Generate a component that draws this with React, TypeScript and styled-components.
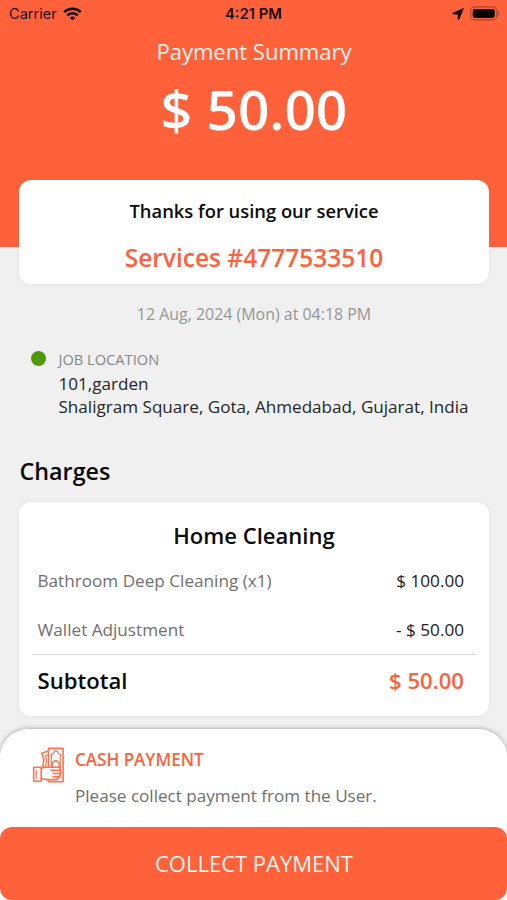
import React from 'react';
import styled, { createGlobalStyle } from 'styled-components';

const ORANGE = '#ff623b';

const GlobalStyle = createGlobalStyle`
  * { box-sizing: border-box; }
  body {
    margin: 0;
    background: #f0f0f0;
    font-family: "Open Sans", "Noto Sans", sans-serif;
    color: #0b0b0b;
  }
`;

const Screen = styled.main`
  width: 507px;
  height: 900px;
  display: flex;
  flex-direction: column;
  overflow: hidden;
  background: #f0f0f0;
`;

const Header = styled.header`
  flex: none;
  height: 247px;
  background: ${ORANGE};
  color: #fff;
  text-align: center;
`;

const StatusBar = styled.div`
  height: 27px;
  padding: 0 7px 0 9px;
  display: grid;
  grid-template-columns: 1fr auto 1fr;
  align-items: center;
  font-family: Inter, "Liberation Sans", sans-serif;
  font-size: 14.6px;
  color: #1c0a05;
`;

const StatusGroup = styled.div<{ $end?: boolean }>`
  display: flex;
  align-items: center;
  gap: 6px;
  justify-content: ${(p) => (p.$end ? 'flex-end' : 'flex-start')};
`;

const Clock = styled.span`
  margin-right: 2px;
  font-size: 14.8px;
  font-weight: 600;
`;

const Title = styled.h1`
  margin: 8px 0 0;
  padding-left: 1px;
  font-size: 22.05px;
  line-height: 32px;
  font-weight: 400;
  color: #fff3ee;
`;

const Total = styled.div`
  margin-top: 7px;
  padding-left: 1px;
  font-size: 55px;
  line-height: 70px;
  font-weight: 600;
`;

const Content = styled.div`
  flex: 1;
  min-height: 0;
  padding: 0 18px 0 19px;
  display: flex;
  flex-direction: column;
`;

const Card = styled.section`
  flex: none;
  background: #fff;
  border-radius: 12px;
  box-shadow: 0 0 5px rgba(0, 0, 0, 0.06);
`;

const ThanksCard = styled(Card)`
  height: 104px;
  margin-top: -67px;
  padding-top: 17px;
  text-align: center;
`;

const ThanksText = styled.p`
  margin: 0;
  font-size: 18.36px;
  line-height: 28px;
  font-weight: 600;
`;

const ServiceNumber = styled.p`
  margin: 15px 0 0;
  font-size: 24.5px;
  line-height: 36px;
  font-weight: 600;
  color: ${ORANGE};
`;

const DateText = styled.p`
  margin: 18px 0 0;
  font-size: 15.95px;
  line-height: 24px;
  text-align: center;
  color: #969696;
`;

const Location = styled.section`
  margin-top: 22px;
  padding-left: 12px;
  display: flex;
  gap: 12.5px;
`;

const Dot = styled.span`
  flex: none;
  width: 15px;
  height: 15px;
  margin-top: 3px;
  border-radius: 50%;
  background: #4f9a04;
`;

const LocationLabel = styled.div`
  font-size: 14.65px;
  line-height: 22px;
  color: #858585;
`;

const Address = styled.div`
  margin-top: 2px;
  font-size: 17.1px;
  line-height: 23px;
  color: #262626;
  white-space: nowrap;
`;

const SectionTitle = styled.h2`
  margin: 36px 0 0;
  padding-left: 0.5px;
  font-size: 23.3px;
  line-height: 34px;
  font-weight: 600;
`;

const ChargesCard = styled(Card)`
  height: 214px;
  margin-top: 14px;
  padding: 17px 13px 0;
`;

const ServiceTitle = styled.h3`
  margin: 0;
  font-size: 22.05px;
  line-height: 32px;
  font-weight: 600;
  text-align: center;
`;

const ChargeList = styled.div`
  padding-top: 5px;
  border-bottom: 1px solid #dadada;
  height: 104px;
`;

const ChargeRow = styled.div`
  height: 49px;
  padding: 0 12px 0 5.5px;
  display: flex;
  align-items: center;
  justify-content: space-between;
  font-size: 17.15px;
  color: #6f6f6f;
`;

const Amount = styled.span`
  color: #222;
`;

const SubtotalRow = styled(ChargeRow)`
  height: 49px;
  font-size: 22.1px;
  font-weight: 600;
  color: #0b0b0b;
`;

const SubtotalAmount = styled.span`
  color: ${ORANGE};
`;

const Sheet = styled.footer`
  flex: none;
  height: 171px;
  display: flex;
  flex-direction: column;
  justify-content: space-between;
  background: #fff;
  border-radius: 28px 28px 0 0;
  box-shadow: 0 -1px 4px rgba(0, 0, 0, 0.26);
`;

const Payment = styled.div`
  padding: 18px 0 0 32px;
  display: flex;
  gap: 10px;
`;

const PaymentMethod = styled.div`
  font-size: 17.05px;
  line-height: 26px;
  font-weight: 600;
  color: ${ORANGE};
`;

const PaymentNote = styled.div`
  margin-top: 10px;
  font-size: 17.1px;
  line-height: 26px;
  color: #6f6f6f;
`;

const CollectButton = styled.button`
  height: 73px;
  width: 100%;
  border: 0;
  padding: 0 0 1px 1px;
  border-radius: 12px;
  background: ${ORANGE};
  color: #fff3ee;
  font: 400 22px "Open Sans", "Noto Sans", sans-serif;
`;

const WifiIcon = () => (
  <svg width="19" height="14" viewBox="0 0 19 14" fill="none" stroke="#120400" strokeWidth="2.5">
    <path d="M1.2 5.2a11.8 11.8 0 0 1 16.6 0" />
    <path d="M4.1 8.4a7.7 7.7 0 0 1 10.8 0" />
    <path d="M9.5 13.6 6.7 10.8a4 4 0 0 1 5.6 0Z" fill="#120400" stroke="none" />
  </svg>
);

const LocationArrow = () => (
  <svg width="12" height="12" viewBox="0 0 12 12">
    <path d="M11.4.5 6.9 11.3c-.2.5-.8.4-.8-.2V6.1H.9c-.6 0-.7-.6-.2-.8Z" fill="#120400" stroke="#120400" strokeWidth=".7" strokeLinejoin="round" />
  </svg>
);

const Battery = () => (
  <svg width="30" height="15" viewBox="0 0 30 15">
    <rect x=".7" y=".9" width="26" height="13" rx="4" fill="none" stroke="#a84528" strokeWidth="1.1" />
    <rect x="2.7" y="2.9" width="22" height="9" rx="1.8" fill="#080200" />
    <path d="M27.8 5.2c2 .8 2 3.8 0 4.6Z" fill="#a84528" />
  </svg>
);

const CashIcon = () => (
  <svg width="33" height="37" viewBox="0 0 33 37" fill="none" stroke="#ff7450" strokeWidth="1.6" strokeLinejoin="round" strokeLinecap="round">
    <path d="M16.5 20V1.4h14.6v33.3H16.5v-1.6" />
    <path d="M19.4 20V7c1.7 0 2.8-1.2 2.8-2.8h3.2c0 1.6 1.2 2.8 2.8 2.8v22.6c-1.6 0-2.8 1.2-2.8 2.8h-3.2" strokeWidth="1.2" />
    <path d="M16.3 4 9.8 6.3l2.1 6.3-1.1 6.8" />
    <path d="M16.3 7.7 13.4 8.8c.9 1.7.7 3.4 1.1 5.2l-1 5.2" strokeWidth="1.2" />
    <path d="M20.9 19.9a3.6 3.6 0 1 1 5.6 0" />
    <path d="M1.7 20.2h7.5v14.1H1.7z" />
    <path d="M4.2 23.4v7.8" strokeWidth="1.2" />
    <path d="M9.2 21.4c3.2-1.8 4.3-1.4 7.4-1.1h10c2.4 0 2.4 3.1 0 3.1h-7.4M21 23.4h6.4c2.2 0 2.2 3.1 0 3.1H21M21 26.5h5.7c2.2 0 2.2 3.1 0 3.1H21M21 29.6h3.6c2.1 0 2.1 3 0 3h-9.2c-2 0-4.2-.4-6.2-1" />
  </svg>
);

export default function App() {
  return (
    <>
      <GlobalStyle />
      <Screen>
        <Header>
          <StatusBar>
            <StatusGroup>
              <span>Carrier</span>
              <WifiIcon />
            </StatusGroup>
            <Clock>4:21 PM</Clock>
            <StatusGroup $end>
              <LocationArrow />
              <Battery />
            </StatusGroup>
          </StatusBar>
          <Title>Payment Summary</Title>
          <Total>$ 50.00</Total>
        </Header>
        <Content>
          <ThanksCard>
            <ThanksText>Thanks for using our service</ThanksText>
            <ServiceNumber>Services #4777533510</ServiceNumber>
          </ThanksCard>
          <DateText>12 Aug, 2024 (Mon) at 04:18 PM</DateText>
          <Location>
            <Dot />
            <div>
              <LocationLabel>JOB LOCATION</LocationLabel>
              <Address>
                101,garden
                <br />
                Shaligram Square, Gota, Ahmedabad, Gujarat, India
              </Address>
            </div>
          </Location>
          <SectionTitle>Charges</SectionTitle>
          <ChargesCard>
            <ServiceTitle>Home Cleaning</ServiceTitle>
            <ChargeList>
              <ChargeRow>
                Bathroom Deep Cleaning (x1)
                <Amount>$ 100.00</Amount>
              </ChargeRow>
              <ChargeRow>
                Wallet Adjustment
                <Amount>- $ 50.00</Amount>
              </ChargeRow>
            </ChargeList>
            <SubtotalRow>
              Subtotal
              <SubtotalAmount>$ 50.00</SubtotalAmount>
            </SubtotalRow>
          </ChargesCard>
        </Content>
        <Sheet>
          <Payment>
            <CashIcon />
            <div>
              <PaymentMethod>CASH PAYMENT</PaymentMethod>
              <PaymentNote>Please collect payment from the User.</PaymentNote>
            </div>
          </Payment>
          <CollectButton>COLLECT PAYMENT</CollectButton>
        </Sheet>
      </Screen>
    </>
  );
}
